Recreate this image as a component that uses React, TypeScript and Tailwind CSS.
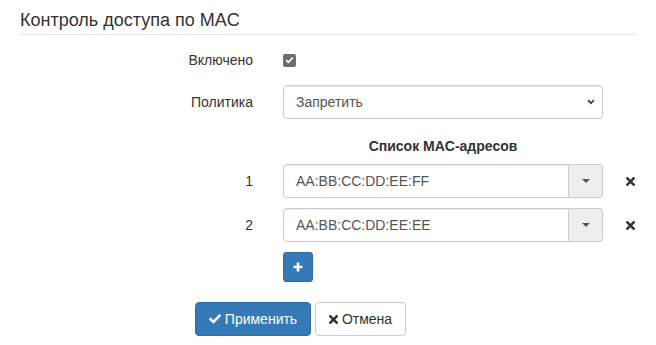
import React from "react";

function RemoveIcon({ size = 9, color = "#333" }: { size?: number; color?: string }) {
  return (
    <svg width={size} height={size} viewBox="0 0 10 10">
      <path d="M1.5 1.5 L8.5 8.5 M8.5 1.5 L1.5 8.5" stroke={color} strokeWidth="2.8" strokeLinecap="square" />
    </svg>
  );
}

function OkIcon() {
  return (
    <svg width="12" height="10" viewBox="0 0 12 10">
      <path d="M1.5 5.2 L4.5 8 L10.5 1.8" stroke="#fff" strokeWidth="2.6" fill="none" strokeLinecap="square" />
    </svg>
  );
}

function MacRow({ n, value }: { n: number; value: string }) {
  return (
    <div className="flex items-center h-[34px]">
      <div className="w-[233px] text-right">{n}</div>
      <div className="ml-[30px] w-[320px] flex h-[34px]">
        <div className="flex-1 flex items-center pl-[12px] border border-[#ccc] rounded-l-[4px] text-[#555] shadow-[inset_0_1px_1px_rgba(0,0,0,0.075)]">
          {value}
        </div>
        <div className="w-[34px] flex items-center justify-center border border-l-0 border-[#ccc] rounded-r-[4px] bg-[#eeeeee]">
          <svg width="8" height="4" viewBox="0 0 8 4">
            <path d="M0 0 L8 0 L4 4 Z" fill="#555" />
          </svg>
        </div>
      </div>
      <div className="ml-[23px] flex items-center">
        <RemoveIcon />
      </div>
    </div>
  );
}

export default function App() {
  return (
    <div className="px-[20px] text-[14px] text-[#333] bg-white h-[345px]" style={{ fontFamily: '"Liberation Sans", Arial, sans-serif' }}>
      <div className="pt-[10px] pb-[4px] leading-[20px] text-[18px] border-b border-[#e5e5e5]">Контроль доступа по MAC</div>

      <div className="mt-[15px] flex items-center h-[20px]">
        <div className="w-[233px] text-right">Включено</div>
        <div className="ml-[30px] w-[13px] h-[13px] rounded-[2px] bg-[#6e6e6e] flex items-center justify-center">
          <svg width="9" height="8" viewBox="0 0 9 8">
            <path d="M1.2 4.2 L3.4 6.3 L7.8 1.5" stroke="#fff" strokeWidth="1.8" fill="none" />
          </svg>
        </div>
      </div>

      <div className="mt-[15px] flex items-center h-[34px]">
        <div className="w-[233px] text-right">Политика</div>
        <div className="ml-[30px] w-[320px] h-[34px] flex items-center justify-between pl-[12px] pr-[7px] border border-[#ccc] rounded-[4px] text-[#555] shadow-[inset_0_1px_1px_rgba(0,0,0,0.075)]">
          <span>Запретить</span>
          <svg width="8" height="6" viewBox="0 0 8 6">
            <path d="M1 1.2 L4 4.2 L7 1.2" stroke="#444" strokeWidth="1.8" fill="none" />
          </svg>
        </div>
      </div>

      <div className="mt-[17px] flex items-center h-[20px]">
        <div className="ml-[263px] w-[320px] text-center font-bold">Список MAC-адресов</div>
      </div>

      <div className="mt-[8px] flex flex-col gap-[10px]">
        <MacRow n={1} value="AA:BB:CC:DD:EE:FF" />
        <MacRow n={2} value="AA:BB:CC:DD:EE:EE" />
      </div>

      <div className="mt-[10px] ml-[263px] w-[30px] h-[30px] rounded-[3px] bg-[#337ab7] border border-[#2e6da4] flex items-center justify-center">
        <svg width="10" height="10" viewBox="0 0 10 10">
          <path d="M5 0.5 V9.5 M0.5 5 H9.5" stroke="#fff" strokeWidth="2.6" />
        </svg>
      </div>

      <div className="mt-[20px] ml-[175px] flex gap-[4px]">
        <div className="h-[34px] w-[116px] flex items-center justify-center gap-[4px] rounded-[4px] bg-[#337ab7] border border-[#2e6da4] text-white">
          <OkIcon />
          <span>Применить</span>
        </div>
        <div className="h-[34px] w-[91px] flex items-center justify-center gap-[4px] rounded-[4px] bg-white border border-[#ccc] text-[#333]">
          <RemoveIcon size={9} />
          <span>Отмена</span>
        </div>
      </div>
    </div>
  );
}
